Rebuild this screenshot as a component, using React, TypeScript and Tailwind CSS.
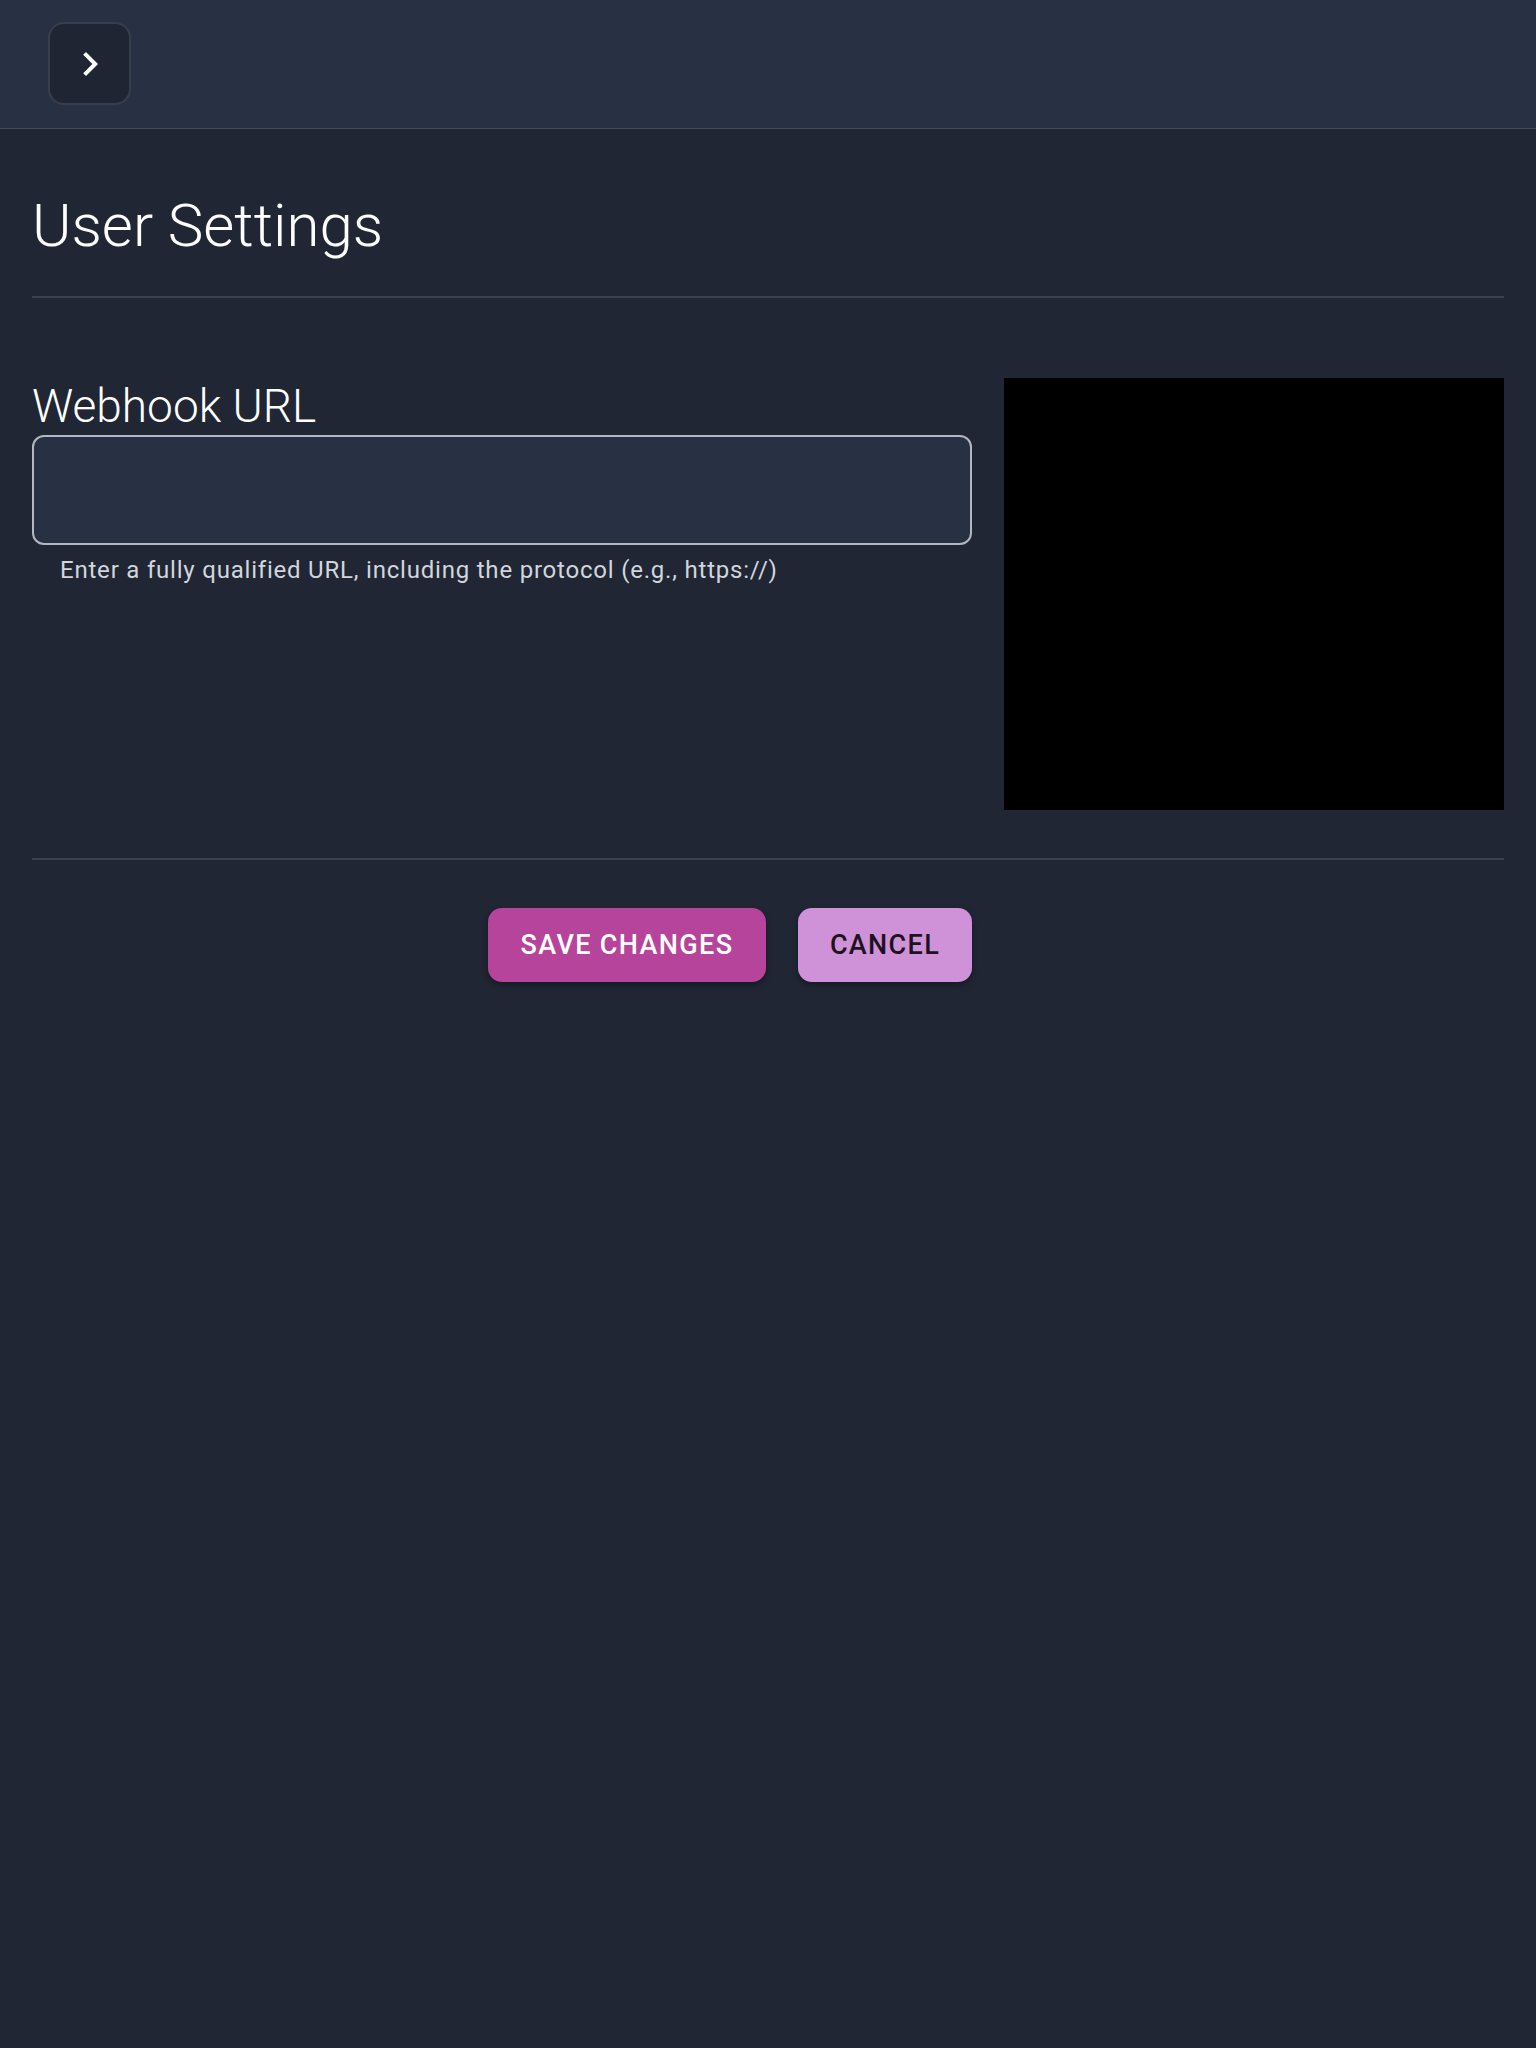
import React from "react";

function ChevronRight() {
  return (
    <svg viewBox="0 0 24 24" className="h-[48px] w-[48px]" fill="currentColor">
      <path d="M10 6 8.59 7.41 13.17 12l-4.58 4.59L10 18l6-6z" />
    </svg>
  );
}

export default function App() {
  return (
    <div className="min-h-[2048px] bg-[#202634] font-['Roboto','Liberation_Sans',sans-serif] text-white">
      <header className="h-[129px] border-b border-[#424959] bg-[#283044] px-[48px] pt-[22px]">
        <button className="flex h-[83px] w-[83px] items-center justify-center rounded-[16px] border-2 border-[#373e4d] bg-[#1f2533] text-white">
          <ChevronRight />
        </button>
      </header>

      <main className="px-[32px]">
        <h1 className="pt-[60px] pb-[33px] text-[60px] font-light leading-[74px]">
          User Settings
        </h1>
        <div className="h-[2px] bg-[#3a4151]" />

        <div className="mt-[80px] grid grid-cols-[940px_500px] gap-[32px]">
          <div>
            <label className="block text-[46px] font-light leading-[56px]">
              Webhook URL
            </label>
            <input
              type="text"
              className="mt-[1px] block h-[110px] w-full rounded-[12px] border-2 border-[#b3b7bf] bg-[#283044] px-[20px] text-[24px] text-white outline-none"
            />
            <p className="mt-[11px] pl-[28px] text-[24px] leading-[28px] tracking-[0.033em] text-[#d2d6dc]">
              Enter a fully qualified URL, including the protocol (e.g., https://)
            </p>
          </div>
          <div className="h-[432px] bg-black" />
        </div>

        <div className="mt-[48px] h-[2px] bg-[#3a4151]" />

        <div className="mt-[48px] grid grid-cols-[940px_500px] gap-[32px]">
          <div className="flex justify-end gap-[32px]">
            <button className="h-[74px] w-[278px] rounded-[14px] bg-[#b5449a] text-[27px] font-medium tracking-[0.05em] text-white shadow-[0_3px_6px_rgba(0,0,0,0.35)]">
              SAVE CHANGES
            </button>
            <button className="h-[74px] w-[174px] rounded-[14px] bg-[#cf92d8] text-[27px] font-medium tracking-[0.05em] text-[#1c1220] shadow-[0_3px_6px_rgba(0,0,0,0.35)]">
              CANCEL
            </button>
          </div>
        </div>
      </main>
    </div>
  );
}
